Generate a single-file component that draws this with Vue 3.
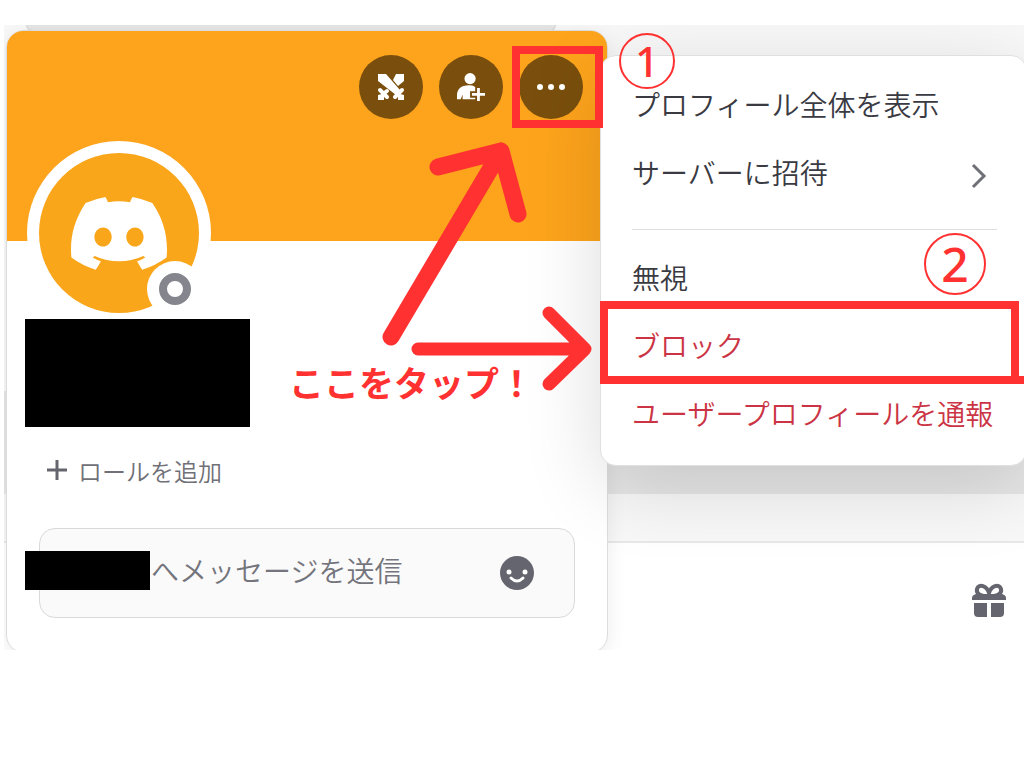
<script setup>
import { ref } from 'vue'

const message = ref('')
const mainItems = [
  { label: 'プロフィール全体を表示' },
  { label: 'サーバーに招待', submenu: true }
]
const moderationItems = [
  { label: '無視' },
  { label: 'ブロック', danger: true, marked: true },
  { label: 'ユーザープロフィールを通報', danger: true }
]
</script>

<template>
  <main class="scene">
    <div class="backdrop" aria-hidden="true">
      <div class="strip"></div>
      <div class="chat"></div>
      <div class="typing"></div>
      <div class="composer">
        <svg class="gift" viewBox="0 0 34 34">
          <path fill="none" stroke="#65656f" stroke-width="4" d="M17 13C8 14 4 10 5 6c2-6 10-3 12 4 2-7 10-10 12-4 1 4-3 8-12 7z" />
          <path fill="#65656f" d="M4 11h26q4 1 4 4v2H0v-2q0-3 4-4zM2 20h13v14H6q-4 0-4-4zM19 20h13v10q0 4-4 4h-9z" />
        </svg>
      </div>
    </div>

    <section class="card" aria-label="プロフィール">
      <header class="banner">
        <button class="action" type="button" aria-label="ゲームに招待">
          <svg viewBox="0 0 28 28" fill="#fff">
            <path d="M19 1h8v7l-6 5-5-6z" />
            <path d="M1 1h8l14 16-4 5L1 8z" />
            <path d="M1 22l4-1 2 2v4H1zM27 22l-4-1-2 2v4h6z" />
            <path fill="none" stroke="#fff" stroke-width="4" stroke-linecap="round" d="M3 17l7 7M6 21l4-3M25 17l-7 7M4 24l3-3M24 24l-3-3" />
          </svg>
        </button>
        <button class="action" type="button" aria-label="フレンドに追加">
          <svg viewBox="0 0 30 30">
            <circle cx="14" cy="6" r="6" fill="#fff" />
            <path fill="#fff" d="M0 28v-4c0-7 4-11 13-11 5 0 8 2 10 6v9H6v-5l-2 5z" />
            <path stroke="#7a4f0d" stroke-width="7" d="M23 14v16M14 23h16" />
            <path stroke="#fff" stroke-width="3" d="M23 16v14M16 23h14" />
          </svg>
        </button>
        <div class="marked-action">
          <button class="action" type="button" aria-label="その他">
            <svg viewBox="0 0 28 28" fill="#fff">
              <circle cx="3" cy="14" r="3" /><circle cx="14" cy="14" r="3" /><circle cx="25" cy="14" r="3" />
            </svg>
          </button>
          <span class="action-mark"></span>
        </div>
      </header>

      <div class="body">
        <svg class="avatar" viewBox="0 0 184 184" role="img" aria-label="アバター">
          <circle cx="92" cy="92" r="92" fill="#fff" />
          <circle cx="92" cy="92" r="80" fill="#faa61a" />
          <g transform="translate(44 56) scale(.755)">
            <path fill="#fff" d="M107.7,8.07A105.15,105.15,0,0,0,81.47,0a72.06,72.06,0,0,0-3.36,6.83A97.68,97.68,0,0,0,49,6.83,72.37,72.37,0,0,0,45.64,0,105.89,105.89,0,0,0,19.39,8.09C2.79,32.65-1.71,56.6.54,80.21h0A105.73,105.73,0,0,0,32.71,96.36,77.7,77.7,0,0,0,39.6,85.25a68.42,68.42,0,0,1-10.85-5.18c.91-.66,1.8-1.34,2.66-2a75.57,75.57,0,0,0,64.32,0c.87.71,1.76,1.39,2.66,2a68.68,68.68,0,0,1-10.87,5.19,77,77,0,0,0,6.89,11.1A105.25,105.25,0,0,0,126.6,80.22h0C129.24,52.84,122.09,29.11,107.7,8.07ZM42.45,65.69C36.18,65.69,31,60,31,53s5-12.74,11.43-12.74S54,46,53.89,53,48.84,65.69,42.45,65.69Zm42.24,0C78.41,65.69,73.25,60,73.25,53s5-12.74,11.44-12.74S96.23,46,96.12,53,91.08,65.69,84.69,65.69Z" />
          </g>
          <circle cx="148" cy="148" r="28" fill="#fff" />
          <circle cx="148" cy="148" r="12" fill="none" stroke="#84858d" stroke-width="8" />
        </svg>
        <div class="name-cover"></div>
        <button class="roles" type="button">
          <svg viewBox="0 0 22 22" stroke="#65656f" stroke-width="3"><path d="M11 1v20M1 11h20" /></svg>
          ロールを追加
        </button>
        <div class="field">
          <input v-model="message" type="text" aria-label="メッセージ" placeholder="へメッセージを送信">
          <span class="field-cover"></span>
          <button class="emoji" type="button" aria-label="絵文字">
            <svg viewBox="0 0 34 34">
              <circle cx="17" cy="17" r="17" fill="#65656f" />
              <circle cx="9" cy="16" r="2.5" fill="#fff" /><circle cx="25" cy="16" r="2.5" fill="#fff" />
              <path fill="none" stroke="#fff" stroke-width="3" stroke-linecap="round" d="M11 22q6 6 12 0" />
            </svg>
          </button>
        </div>
      </div>
    </section>

    <nav class="menu" aria-label="その他の操作">
      <button v-for="item in mainItems" :key="item.label" class="item" type="button">
        {{ item.label }}
        <svg v-if="item.submenu" class="chevron" viewBox="0 0 16 26"><path fill="none" stroke="#707078" stroke-width="3" d="M2 2l11 11L2 24" /></svg>
      </button>
      <hr>
      <button
        v-for="item in moderationItems" :key="item.label" type="button"
        class="item" :class="{ danger: item.danger, marked: item.marked }"
      >{{ item.label }}</button>
    </nav>

    <div class="notes">
      <svg class="arrows" viewBox="0 0 310 260" aria-hidden="true">
        <g fill="none" stroke="#ff3131" stroke-linecap="round" stroke-linejoin="round">
          <path stroke-width="17" d="M101 212L211 26M148 42l63-16 17 63" />
          <path stroke-width="13" d="M128 224h166M259 188l36 36-36 35" />
        </g>
      </svg>
      <span class="step one">1</span>
      <span class="step two">2</span>
      <strong class="hint">ここをタップ！</strong>
    </div>
  </main>
</template>

<style>
body { background: #fff; }
</style>

<style scoped>
.scene {
  position: relative;
  margin: 25px 0 0 4px;
  overflow: hidden;
  font-family: "Noto Sans CJK JP", sans-serif;
  font-weight: 350;
}
.scene * { box-sizing: border-box; }
button { border: 0; background: none; padding: 0; font: inherit; color: inherit; cursor: pointer; }
svg { display: block; }

.backdrop { position: absolute; inset: 0; display: flex; flex-direction: column; background: #f8f8f8; }
.strip { width: 52%; height: 6px; margin-left: 22px; background: #e6e6e6; border: 1px solid #d6d6d6; border-top: 0; border-radius: 0 0 14px 14px; }
.chat { height: 463px; background: linear-gradient(transparent 360px, #e6e6e6 360px); }
.typing { height: 49px; background: #f8f8f8; border-bottom: 2px solid #e8e8e8; }
.composer { flex: 1; display: flex; justify-content: flex-end; align-items: flex-start; padding: 40px 18px 0; background: #fff; }
.gift { width: 34px; height: 34px; overflow: visible; }

.card {
  position: relative;
  width: 59%;
  margin: 5px 0 -3px 2px;
  border: 1px solid #dcdcdc;
  border-radius: 18px;
  background: #fff;
  box-shadow: 0 4px 20px rgba(0, 0, 0, .08);
}
.banner {
  display: flex;
  justify-content: flex-end;
  gap: 16px;
  height: 210px;
  padding: 24px;
  border-radius: 16px 16px 0 0;
  background: #fea41c;
}
.action {
  display: grid;
  place-items: center;
  width: 64px;
  height: 64px;
  border-radius: 50%;
  background: #7a4f0d;
}
.action svg { width: 28px; height: 28px; }
.marked-action { position: relative; height: 64px; }
.action-mark { position: absolute; z-index: 3; inset: -9px -20px -9px -7px; border: 8px solid #ff3131; pointer-events: none; }

.body { padding: 0 32px 34px; }
.avatar { width: 184px; height: 184px; margin: -100px 0 -6px -12px; }
.name-cover { position: relative; width: 225px; height: 108px; margin-left: -14px; background: #000; }
.roles { display: flex; align-items: center; gap: 10px; height: 36px; margin: 25px 0 40px 7px; font-size: 24px; color: #707078; }
.roles svg { width: 22px; height: 22px; }
.field {
  position: relative;
  display: flex;
  align-items: center;
  height: 90px;
  padding-right: 40px;
  border: 1px solid #d9d9db;
  border-radius: 16px;
  background: #fafafa;
}
.field input {
  flex: 1;
  min-width: 0;
  height: 40px;
  margin-left: 111px;
  padding: 0 0 6px;
  border: 0;
  outline: 0;
  background: none;
  font: inherit;
  font-size: 28px;
  color: #4b4b52;
}
.field input::placeholder { color: #74747c; opacity: 1; }
.field-cover { position: absolute; left: -15px; top: 22px; width: 125px; height: 39px; background: #000; }
.emoji svg { width: 34px; height: 34px; }

.menu {
  position: absolute;
  z-index: 2;
  left: 596px;
  right: -3px;
  top: 30px;
  padding: 14px 29px 18px 31px;
  border: 1px solid #e0e0e0;
  border-radius: 16px;
  background: #fff;
  box-shadow: 0 20px 80px rgba(0, 0, 0, .14);
}
.item {
  position: relative;
  display: flex;
  align-items: center;
  justify-content: space-between;
  width: 100%;
  height: 68px;
  font-size: 28px;
  text-align: left;
  white-space: nowrap;
  color: #3a3a42;
}
.danger { color: #cb3444; }
.chevron { width: 16px; height: 26px; margin: 8px 10px 0 0; }
hr { height: 1px; margin: 23px 0 13px; border: 0; background: #dedee0; }
.marked::before { content: ""; position: absolute; inset: -10px -22px -5px -32px; border: 8px solid #ff3131; }
.marked::after { content: ""; position: absolute; right: -29px; bottom: -5px; width: 16px; height: 8px; background: #ff3131; }

.notes { position: absolute; z-index: 4; inset: 0; color: #ff3131; pointer-events: none; }
.arrows { position: absolute; left: 286px; top: 100px; width: 310px; height: 260px; overflow: visible; }
.step { position: absolute; display: grid; place-items: center; border: 2px solid #ff3131; border-radius: 50%; font-family: "Noto Sans", sans-serif; font-weight: 500; }
.one { left: 615px; top: 8px; width: 56px; height: 56px; font-size: 42px; line-height: 48px; }
.two { left: 920px; top: 208px; width: 62px; height: 62px; font-size: 48px; line-height: 58px; }
.hint { position: absolute; left: 285px; top: 333px; font-size: 35px; line-height: 48px; font-weight: 700; white-space: nowrap; }
</style>
